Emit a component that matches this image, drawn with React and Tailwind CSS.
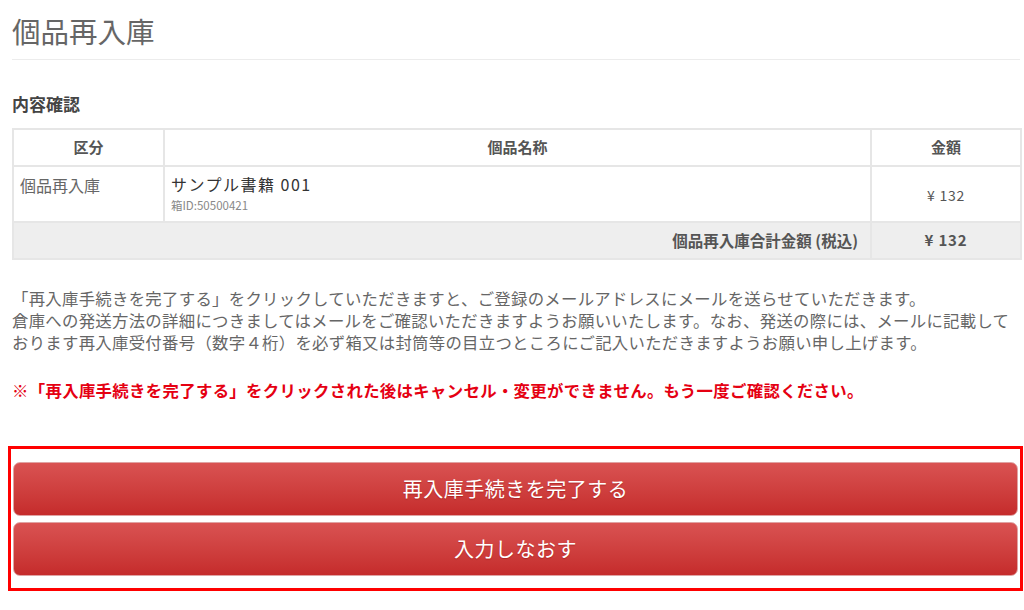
import React from 'react';

const font = { fontFamily: '"Noto Sans CJK JP", "Noto Sans", sans-serif' };

const App = () => {
    return (
        <div className="bg-white min-h-screen w-[1024px] text-[#666]" style={font}>
            {/* PAGE TITLE */}
            <div className="mx-[12px] mr-[4px] pt-[13px] pb-[10px] border-b border-[#ececec]">
                <h1 className="text-[28.5px] leading-[36px] text-[#666] font-normal">個品再入庫</h1>
            </div>

            <div className="pl-[12px] pr-[4px]">
                <h2 className="mt-[32px] text-[17px] leading-[24px] font-bold text-[#444]">内容確認</h2>

                {/* CONFIRM TABLE */}
                <table className="mt-[12px] w-[1008px] border-collapse border-2 border-[#e6e6e6] table-fixed">
                    <colgroup>
                        <col className="w-[151px]" />
                        <col className="w-[707px]" />
                        <col className="w-[150px]" />
                    </colgroup>
                    <thead>
                        <tr className="h-[37px]">
                            <th className="border-2 border-[#e6e6e6] text-[15px] font-bold text-[#555] text-center">区分</th>
                            <th className="border-2 border-[#e6e6e6] text-[15px] font-bold text-[#555] text-center">個品名称</th>
                            <th className="border-2 border-[#e6e6e6] text-[15px] font-bold text-[#555] text-center">金額</th>
                        </tr>
                    </thead>
                    <tbody>
                        <tr className="h-[56px]">
                            <td className="border-2 border-[#e6e6e6] align-top pt-[7px] px-[6px] text-[16px] leading-[22px] text-[#666]">個品再入庫</td>
                            <td className="border-2 border-[#e6e6e6] align-top pt-[6px] px-[6px]">
                                <div className="text-[16px] leading-[22px] tracking-[1.5px] text-[#333]">サンプル書籍 001</div>
                                <div className="text-[11.5px] leading-[14px] text-[#888] mt-[3px]">箱ID:50500421</div>
                            </td>
                            <td className="border-2 border-[#e6e6e6] text-center text-[14px] text-[#555] tracking-[0.8px] pt-[2px]">¥ 132</td>
                        </tr>
                        <tr className="h-[37px] bg-[#eeeeee]">
                            <td colSpan={2} className="border-2 border-[#e6e6e6] text-right pr-[12px] text-[15.5px] font-bold text-[#555]">個品再入庫合計金額 (税込)</td>
                            <td className="border-2 border-[#e6e6e6] text-center text-[15px] font-bold text-[#555] tracking-[0.8px]">¥ 132</td>
                        </tr>
                    </tbody>
                </table>

                {/* NOTICE */}
                <p className="mt-[27px] text-[16.4px] leading-[22px] tracking-[0.28px] text-[#666] whitespace-nowrap">
                    「再入庫手続きを完了する」をクリックしていただきますと、ご登録のメールアドレスにメールを送らせていただきます。<br />
                    倉庫への発送方法の詳細につきましてはメールをご確認いただきますようお願いいたします。なお、発送の際には、メールに記載して<br />
                    おります再入庫受付番号（数字４桁）を必ず箱又は封筒等の目立つところにご記入いただきますようお願い申し上げます。
                </p>
                <p className="mt-[26px] text-[16.4px] leading-[22px] tracking-[0.33px] font-bold text-[#e50012] whitespace-nowrap">
                    ※「再入庫手続きを完了する」をクリックされた後はキャンセル・変更ができません。もう一度ご確認ください。
                </p>
            </div>

            {/* ACTIONS */}
            <div className="ml-[8px] mt-[45px] w-[1015px] border-[3px] border-[#ff0000] px-[2px] pt-[13px] pb-[12px] flex flex-col gap-[6px]">
                <button className="h-[54px] w-full rounded-[7px] border border-[#e0a3a3] bg-gradient-to-b from-[#d95252] to-[#c52b2b] text-white text-[20px] tracking-[0.5px] [text-shadow:0_1px_1px_rgba(120,0,0,0.35)]">
                    再入庫手続きを完了する
                </button>
                <button className="h-[54px] w-full rounded-[7px] border border-[#e0a3a3] bg-gradient-to-b from-[#d95252] to-[#c52b2b] text-white text-[20px] tracking-[0.5px] [text-shadow:0_1px_1px_rgba(120,0,0,0.35)]">
                    入力しなおす
                </button>
            </div>
        </div>
    );
};

export default App;
